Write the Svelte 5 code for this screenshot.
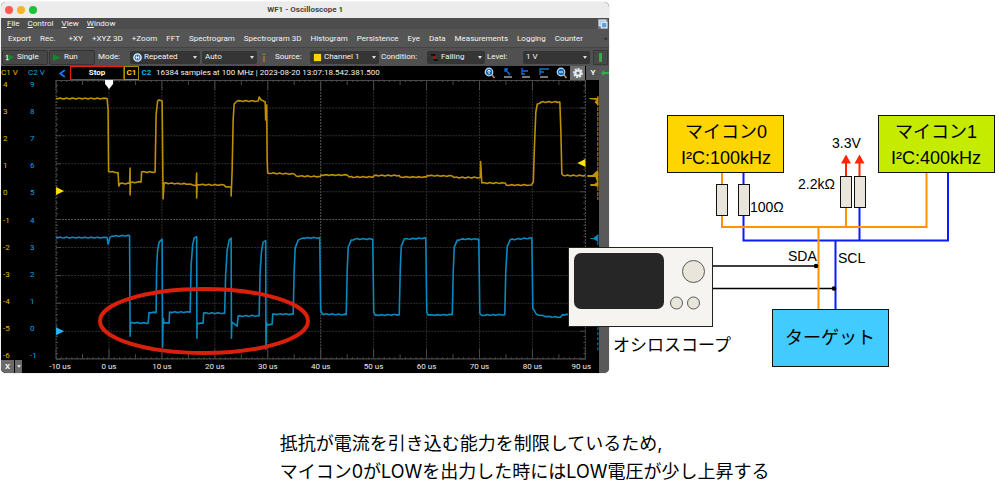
<script>
	const menus = ["File", "Control", "View", "Window"];
	const tools = [
		"Export", "Rec.", "+XY", "+XYZ 3D", "+Zoom", "FFT", "Spectrogram", "Spectrogram 3D",
		"Histogram", "Persistence", "Eye", "Data", "Measurements", "Logging", "Counter"
	];

	let mode = $state("Repeated");
	let auto = $state("Auto");
	let source = $state("Channel 1");
	let condition = $state("Falling");
	let level = $state("1 V");

	// plot area
	const left = 56;
	const top = 80;
	const right = 585;
	const bottom = 359;
	const stepX = (right - left) / 10;
	const stepY = (bottom - top) / 10;

	// the outer time labels are pulled inwards
	const columns = Array.from({ length: 11 }, (_, i) => ({
		x: left + i * stepX,
		label: Math.min(Math.max(left + i * stepX, 60), 581),
		us: i * 10 - 10
	}));
	const rows = Array.from({ length: 11 }, (_, i) => ({ y: top + i * stepY, label: 87 + i * 27.1, c1: 4 - i, c2: 9 - i }));
	const ticksX = Array.from({ length: 101 }, (_, i) => ({
		x: left + (i * stepX) / 10,
		size: i % 10 === 0 ? 10 : i % 5 === 0 ? 5 : 2
	}));
	const ticksY = Array.from({ length: 51 }, (_, i) => ({ y: top + (i * stepY) / 5, size: i % 5 === 0 ? 5 : 2 }));

	const trace1 = [
		[56, 98.5], [107, 98.5], [108, 110], [108.5, 171.5], [118, 172.5], [118.7, 186], [120, 183.5], [129.5, 183.5],
		[130, 168], [130, 195], [130.4, 182.5], [141, 182], [141.5, 172], [155, 172], [156, 115], [157.5, 101],
		[159, 100], [162, 101], [163, 199], [164, 183], [190, 184], [196, 185.5], [196.5, 173], [196.5, 198],
		[197, 184.5], [224, 185], [226, 187], [231, 187], [231, 196], [232, 170], [233, 120], [234, 104],
		[237, 101], [258, 101], [259, 97], [261, 100], [265, 102], [265.5, 120], [266.5, 105], [267, 160],
		[267.5, 173], [294, 174], [296, 176], [320, 176.5], [321, 175], [347, 175], [349, 177], [373, 177],
		[374, 175.5], [399, 175.5], [400, 177], [426, 177], [427, 175.5], [452, 176], [454, 177.5], [480, 177.5],
		[480.3, 161.5], [481.5, 183], [505, 183], [506, 185], [531, 185], [533, 182], [534, 150], [535.5, 112],
		[537, 104], [541, 102], [559.5, 102], [560.5, 130], [561.5, 174], [563, 175.5], [585, 175.5]
	];
	const trace2 = [
		[56, 237.5], [107, 237.5], [108, 244], [110, 237], [112, 236], [129.5, 235.5], [130, 336], [130.5, 322.5],
		[148, 323], [149, 312.5], [156, 312.5], [156.5, 270], [157.5, 250], [159, 242], [162, 239], [162.5, 347],
		[163, 318], [164, 323], [169, 323], [169.5, 312], [190, 312], [191, 265], [192.5, 245], [194, 238],
		[196.5, 236.5], [196.8, 338], [197, 323], [203, 323], [203.5, 313], [224.5, 313], [225.5, 275], [227, 250],
		[229, 240], [231, 238], [231.3, 338], [231.7, 322], [237, 326], [238, 316], [259, 315.5], [260, 270],
		[261.5, 250], [263, 242], [265.5, 240.5], [265.8, 349], [266.2, 322], [267, 325], [272, 324], [272.5, 314],
		[293, 314], [294, 270], [295, 248], [298, 240], [303, 238], [319.5, 237.5], [320.5, 310], [322, 314],
		[346, 314.5], [347, 270], [348, 247], [351, 240], [355, 239], [372.5, 239], [373.5, 312], [375, 315],
		[399, 314.5], [400, 270], [401, 246], [404, 239], [425.5, 238], [426.5, 312], [428, 315], [452, 314.5],
		[453, 270], [454, 247], [457, 240], [461, 239], [478.5, 239], [479.5, 313], [481, 315], [504.5, 314.5],
		[505.5, 270], [507, 246], [510, 239.5], [531.5, 238], [532.5, 308], [536, 314], [545, 316.5], [560, 317],
		[562, 314.5], [585, 314.5]
	];

	// adds a little ripple to the flat stretches
	function path(points) {
		let d = "M" + points[0].join(" ");
		for (let i = 1; i < points.length; i++) {
			const [x0, y0] = points[i - 1];
			const [x, y] = points[i];
			if (Math.abs(y - y0) < 3) {
				for (let k = x0 + 2; k < x - 1; k += 2) {
					const base = y0 + ((y - y0) * (k - x0)) / (x - x0);
					d += `L${k} ${(base + Math.sin(k * 7.3) * 0.5).toFixed(1)}`;
				}
			}
			d += `L${x} ${y}`;
		}
		return d;
	}
</script>

{#snippet magnifier(plus)}
	<svg viewBox="0 0 12 12">
		<path d="M7.5 7.5 10.5 11" stroke="#c58b6a" stroke-width="1.6" />
		<circle cx="5" cy="5" r="3.8" fill="#1767b8" stroke="#b9dcf5" stroke-width="1.2" />
		<path d={plus ? "M5 3v4M3.4 4.4 5 3l1.6 1.4" : "M3 5h4"} stroke="#fff" fill="none" />
	</svg>
{/snippet}

<main>
	<div class="board">
		<section class="window">
			<header class="titlebar">
				<button class="dot red" aria-label="Close"></button>
				<button class="dot amber" aria-label="Minimize"></button>
				<button class="dot green" aria-label="Zoom"></button>
				<h1>WF1 - Oscilloscope 1</h1>
			</header>

			<nav class="menu">
				{#each menus as item}
					<button><u>{item[0]}</u>{item.slice(1)}</button>
				{/each}
				<button class="restore" aria-label="Restore window">
					<svg viewBox="0 0 9 9">
						<rect x="1" y="1" width="6" height="5" fill="#8fc3f0" stroke="#d9ecfb" />
						<rect x="3" y="3" width="5" height="5" fill="#5d9fe0" stroke="#e8f4fd" />
					</svg>
				</button>
			</nav>

			<nav class="tools">
				{#each tools as tool}
					<button class:spaced={tool === "+XY"}>{tool}</button>
				{/each}
				<span class="more">»</span>
			</nav>

			<div class="controls">
				<button class="run">
					<svg viewBox="0 0 10 10">
						<path d="M3 1 10 5 3 9z" fill="#16862c" />
						<path d="M1 3.5 2.5 2.5V7.5M1 7.5h3" stroke="#fff" fill="none" />
					</svg>
					Single
				</button>
				<button class="run">
					<svg viewBox="0 0 10 10"><path d="M1 1 10 5 1 9z" fill="#16862c" /></svg>
					Run
				</button>
				<label class="name mode" for="mode">Mode:</label>
				<div class="pick w70">
					<svg viewBox="0 0 10 10">
						<circle cx="5" cy="5" r="4" fill="#2573b9" stroke="#e3f0fa" stroke-width="1.6" />
						<path d="M3.7 3v4M6.3 3v4M3.7 5h2.6" stroke="#fff" />
					</svg>
					<select id="mode" bind:value={mode}><option>Repeated</option></select>
				</div>
				<div class="pick w55">
					<select aria-label="Trigger" bind:value={auto}><option>Auto</option></select>
				</div>
				<svg class="hammer" viewBox="0 0 10 12">
					<path d="M5 3v8" stroke="#9a6a34" stroke-width="2" />
					<path d="M1 3Q5 0 9 3L8 4H2z" fill="#777" stroke="#222" stroke-width=".5" />
				</svg>
				<label class="name source" for="source">Source:</label>
				<div class="pick w69">
					<svg viewBox="0 0 10 10"><rect x="1" y="1" width="8" height="8" fill="#ffd400" /></svg>
					<select id="source" bind:value={source}><option>Channel 1</option></select>
				</div>
				<label class="name condition" for="condition">Condition:</label>
				<div class="pick w58">
					<svg viewBox="0 0 10 10">
						<path d="M1 2h4v6h4" stroke="#050505" stroke-width="1.4" fill="none" />
						<path d="M3 4h4L5 7z" fill="#d21818" />
					</svg>
					<select id="condition" bind:value={condition}><option>Falling</option></select>
				</div>
				<label class="name level" for="level">Level:</label>
				<div class="combo">
					<input id="level" bind:value={level} />
					<button aria-label="Choose level"></button>
				</div>
				<button class="marker" aria-label="Level marker"><i></i></button>
			</div>

			<div class="body">
				<div class="view">
					<div class="status">
						<span class="unit c1">C1 V</span>
						<span class="unit c2">C2 V</span>
						<button class="back" aria-label="Back">
							<svg viewBox="0 0 8 8"><path d="M6 1 2 4l4 3" stroke="#1b7cff" stroke-width="1.6" fill="none" /></svg>
						</button>
						<button class="stop">Stop</button>
						<button class="channel">C1</button>
						<button class="channel second">C2</button>
						<p>16384 samples at 100 MHz | 2023-08-20 13:07:18.542.381.500</p>
						<div class="icons">
							{@render magnifier(true)}
							<svg viewBox="0 0 12 12">
								<path d="M2 9h8v2H2z" fill="#777" />
								<path d="M3 2 8 8M3 5V2h3" stroke="#1470d8" fill="none" stroke-width="1.3" />
							</svg>
							<svg viewBox="0 0 12 12">
								<path d="M2 9h8v2H2z" fill="#777" />
								<path d="M2 1v7M2 4h6M2 7h3" stroke="#1470d8" fill="none" stroke-width="1.3" />
							</svg>
							<svg viewBox="0 0 12 12">
								<path d="M2 9h8v2H2z" fill="#777" />
								<path d="M2 8V2h9M2 5h4" stroke="#1470d8" fill="none" stroke-width="1.3" />
							</svg>
							{@render magnifier(false)}
						</div>
						<button class="square" aria-label="Settings">
							<svg viewBox="0 0 12 12">
								<circle cx="6" cy="6" r="4" fill="none" stroke="#dbe6ee" stroke-width="2" stroke-dasharray="2 1" />
								<circle cx="6" cy="6" r="2.6" fill="none" stroke="#e4edf3" stroke-width="2" />
							</svg>
						</button>
						<button class="square y">Y</button>
					</div>

					<svg class="plot" viewBox="1 80 598 293">
						{#each columns as { x, label, us }}
							<line x1={x} x2={x} y1={top} y2={bottom} class="grid" class:strong={us === 40 || us === -10 || us === 90} />
							<text x={label} y="369" class="time">{us} us</text>
						{/each}
						{#each rows as { y, label, c1, c2 }, i}
							<line x1={left} x2={right} y1={y} y2={y} class="grid" class:strong={i === 5} />
							<text x="3" y={label} class="c1">{c1}</text>
							<text x="30" y={label} class="c2">{c2}</text>
						{/each}
						<path d="M56 80.5H585M56 358.5H585" class="tick" />
						{#each ticksX as { x, size }}
							<path d="M{x} {top}v{size}M{x} {bottom}v{-size}" class="tick" />
						{/each}
						{#each ticksY as { y, size }}
							<path d="M{left} {y}h{size}M{right} {y}h{-size}" class="tick" />
						{/each}

						<path d={path(trace1)} class="trace one" />
						<path d={path(trace2)} class="trace two" />

						<!-- level histograms -->
						<g fill="#c09200">
							<path d="M589 98h8v-2h1v9h-1l-3-3 2-2-7-1z" />
							<path d="M587 175h5l4-4h2v12h-1l-2-6h-8zM590 184h4l4-3v6l-4-1h-4z" />
						</g>
						<path d="M597.5 97V200" stroke="#c09200" stroke-dasharray="4 1" />
						<path d="M590 238h3l5-4v8l-5-3h-3z" fill="#0b88bd" />
						<path d="M597.5 242V352" stroke="#0b88bd" stroke-dasharray="3 2" />

						<path d="M105 80h8v4l-4 5-4-5z" fill="#fff" />
						<path d="M56 187v8l8-4z" fill="#ffe000" />
						<path d="M56 327v8l8-4z" fill="#22b8f5" />
						<path d="M585 159v8l-8-4z" fill="#ffe000" />
					</svg>
					<div class="corner">
						<button>X</button>
						<button aria-label="X options" class="drop"></button>
					</div>
				</div>
				<aside class="strip">
					<svg viewBox="0 0 10 14"><path d="M2 7 5 4v2h5v2H5v2z" fill="#31b04a" /></svg>
				</aside>
			</div>
		</section>

		<svg class="diagram" viewBox="0 0 999 380">
			<ellipse cx="204" cy="321" rx="104" ry="32" fill="none" stroke="#d9200b" stroke-width="4" />

			<!-- probes -->
			<path d="M712 266H816M712 288.5H834" stroke="#000" stroke-width="1.3" />

			<path d="M743.5 173V240.5H948V173M859.5 207V240.5M835.5 240.5V309" class="scl" />
			<path d="M722 173V227H926.5V173M846 207V227M818.5 227V309" class="sda" />
			<circle cx="816" cy="266" r="2.3" />
			<circle cx="834" cy="288.5" r="2.3" />

			<!-- resistors -->
			<g class="part">
				<rect x="716.5" y="184.5" width="11" height="31" />
				<rect x="738.5" y="184.5" width="11" height="31" />
				<rect x="840.5" y="176.5" width="11" height="31" />
				<rect x="854.5" y="176.5" width="11" height="31" />
			</g>
			<path d="M846 176V162M859.5 176V162" stroke="#ff2600" stroke-width="2" />
			<path d="M846 154.5l5 9h-10zM859.5 154.5l5 9h-10z" fill="#ff2600" />

			<g class="box">
				<rect x="667.5" y="115.5" width="116" height="57" fill="#ffd500" />
				<rect x="878.5" y="115.5" width="116" height="57" fill="#c4eb00" />
				<rect x="772.5" y="309.5" width="116" height="57" fill="#41cbff" />
			</g>
			<g class="title">
				<text x="726" y="138">マイコン0</text>
				<text x="726" y="164">I²C:100kHz</text>
				<text x="936" y="138">マイコン1</text>
				<text x="936" y="164">I²C:400kHz</text>
				<text x="830" y="344">ターゲット</text>
			</g>

			<rect x="568.5" y="247.5" width="144" height="79" fill="#f5f4f1" stroke="#222" />
			<rect x="574" y="253" width="90" height="56" rx="7" fill="#262626" />
			<g fill="#e9e5da" stroke="#333" stroke-width=".8">
				<circle cx="693.5" cy="271.5" r="11" />
				<circle cx="676.5" cy="303" r="6" />
				<circle cx="693.5" cy="303" r="6" />
			</g>
			<text x="613" y="351" class="scope">オシロスコープ</text>

			<g class="note">
				<text x="832" y="148">3.3V</text>
				<text x="798" y="189">2.2kΩ</text>
				<text x="750" y="212">100Ω</text>
				<text x="788" y="261">SDA</text>
				<text x="838" y="263">SCL</text>
			</g>
		</svg>
	</div>

	<p class="caption">
		抵抗が電流を引き込む能力を制限しているため,<br />
		マイコン0がLOWを出力した時にはLOW電圧が少し上昇する
	</p>
</main>

<style>
	:global(body) {
		background: #fff;
	}

	main {
		font-family: "Liberation Sans", "Noto Sans CJK JP", sans-serif;
		color: #000;
	}

	.board {
		display: grid;
		align-items: start;
	}

	.window,
	.diagram {
		grid-area: 1 / 1;
	}

	.diagram {
		z-index: 1;
		width: 100%;
		pointer-events: none;
	}

	.window {
		width: calc(61% - 1px);
		margin: 2px 0 0 1px;
		border-radius: 5px;
		overflow: hidden;
		background: #545454;
		color: #f4f4f4;
		font: 400 8px/10px Roboto, sans-serif;
		box-shadow: 0 0 1px #777;
	}

	button,
	input,
	select {
		font: inherit;
		color: inherit;
		margin: 0;
		padding: 0;
		border: 0;
		background: none;
		white-space: nowrap;
	}

	svg {
		display: block;
		flex: none;
	}

	.titlebar {
		display: flex;
		align-items: center;
		gap: 4px;
		height: 16px;
		padding: 0 4px;
		background: #ececec;
		color: #444;
	}

	.titlebar h1 {
		flex: 1;
		margin: 0 36px 0 0;
		text-align: center;
		font-size: 8px;
		font-weight: 700;
	}

	.dot {
		width: 8px;
		height: 8px;
		border-radius: 50%;
	}

	.red {
		background: #fe5b52;
	}

	.amber {
		background: #f6b42c;
	}

	.green {
		background: #1fc235;
	}

	.menu {
		display: flex;
		align-items: center;
		gap: 8px;
		height: 11px;
		padding: 0 1px 0 6px;
		background: #4d4d4d;
	}

	.restore {
		margin-left: auto;
		background: #757575;
	}

	.restore svg {
		width: 10px;
		height: 10px;
	}

	.tools {
		display: flex;
		align-items: center;
		gap: 9px;
		box-sizing: border-box;
		height: 18px;
		padding: 2px 2px 0 7px;
		background: #555;
	}

	.spaced {
		margin-left: 4px;
	}

	.more {
		margin-left: auto;
		color: #222;
	}

	.controls {
		display: flex;
		align-items: center;
		height: 18px;
		padding: 0 1px;
		border-top: 1px solid #444;
		background: #505050;
	}

	.run {
		display: flex;
		align-items: center;
		gap: 3px;
		width: 46px;
		height: 15px;
		margin-right: 1px;
		padding-left: 2px;
		border: 1px solid #333;
		border-radius: 2px;
		background: #464646;
	}

	.run svg,
	.pick svg {
		width: 9px;
		height: 9px;
	}

	.name {
		flex: none;
	}

	.mode {
		width: 32px;
		padding-left: 2px;
	}

	.source {
		width: 35px;
	}

	.condition {
		width: 46px;
	}

	.level {
		width: 36px;
	}

	.pick,
	.combo {
		display: flex;
		align-items: center;
		gap: 2px;
		height: 13px;
		margin-right: 2px;
		padding: 0 3px;
		box-sizing: border-box;
		border-radius: 2px;
		background: #353535;
	}

	.pick::after,
	.combo button,
	.drop::after {
		content: "";
		border: 2px solid transparent;
		border-top: 3px solid #ddd;
		border-bottom: 0;
	}

	.pick select {
		flex: 1;
		min-width: 0;
		appearance: none;
	}

	.w70 {
		width: 70px;
	}

	.w55 {
		width: 55px;
	}

	.w69 {
		width: 69px;
	}

	.w58 {
		width: 58px;
	}

	.hammer {
		width: 10px;
		height: 12px;
		margin-right: 6px;
	}

	.combo {
		width: 67px;
	}

	.combo input {
		flex: 1;
		min-width: 0;
	}

	.marker {
		display: grid;
		place-items: center;
		width: 15px;
		height: 15px;
		margin-left: auto;
		border: 1px solid #393939;
		background: #484848;
	}

	.marker i {
		width: 3px;
		height: 9px;
		border-radius: 1px;
		background: #25b34a;
	}

	.body {
		display: flex;
	}

	.view {
		position: relative;
		flex: 1;
		min-width: 0;
		background: #000;
	}

	.strip {
		width: 10px;
		background: #595959;
	}

	.status {
		display: flex;
		align-items: center;
		height: 14px;
	}

	.c1 {
		color: #e0bc00;
		fill: #e0bc00;
	}

	.c2 {
		color: #0ba4ea;
		fill: #0ba4ea;
	}

	.unit {
		width: 27px;
	}

	.back {
		width: 15px;
		padding-left: 3px;
	}

	.back svg {
		width: 9px;
		height: 9px;
	}

	.stop {
		width: 54px;
		height: 14px;
		border: 1px solid #e8200f;
		color: #fff;
		font-weight: 700;
	}

	.channel {
		width: 15px;
		height: 14px;
		border: 1px solid #a88c00;
		color: #ffd400;
		font-weight: 700;
	}

	.second {
		border-color: transparent;
		color: #17b1ef;
	}

	.status p {
		margin: 0 0 0 2px;
		white-space: nowrap;
	}

	.icons {
		display: flex;
		gap: 6px;
		margin: 0 2px 0 auto;
	}

	.icons svg,
	.square svg {
		width: 12px;
		height: 12px;
	}

	.square {
		display: grid;
		place-items: center;
		width: 15px;
		height: 14px;
		background: #6d6d6d;
		font-weight: 700;
	}

	.y {
		width: 13px;
		margin-left: 1px;
		background: #555;
	}

	.plot {
		width: 100%;
		font-size: 8px;
	}

	.grid {
		stroke: #2e2e2e;
		stroke-dasharray: 2 1;
	}

	.grid.strong {
		stroke: #555;
	}

	.tick {
		stroke: #4a4a4a;
	}

	.time {
		fill: #eee;
		text-anchor: middle;
	}

	.trace {
		fill: none;
		stroke-width: 1.6;
		stroke-linejoin: round;
	}

	.one {
		stroke: #bd9000;
	}

	.two {
		stroke: #0b88bd;
	}

	.corner {
		position: absolute;
		left: 0;
		bottom: 0;
		display: flex;
		gap: 1px;
	}

	.corner button {
		width: 13px;
		height: 13px;
		background: #6a6a6a;
		font-weight: 700;
	}

	.corner .drop {
		display: grid;
		place-items: center;
		width: 7px;
	}

	.scl,
	.sda {
		fill: none;
		stroke-width: 2;
	}

	.scl {
		stroke: #0a1cff;
	}

	.sda {
		stroke: #ff9300;
	}

	.part {
		fill: #e9e5da;
		stroke: #111;
	}

	.box {
		stroke: #111;
	}

	.title {
		font-size: 18px;
		text-anchor: middle;
	}

	.scope {
		font-size: 17px;
	}

	.note {
		font-size: 14px;
	}

	.caption {
		margin: 50px 0 0 28%;
		font-family: Inter, "Noto Sans CJK JP", sans-serif;
		font-size: 18px;
		line-height: 28px;
	}
</style>
